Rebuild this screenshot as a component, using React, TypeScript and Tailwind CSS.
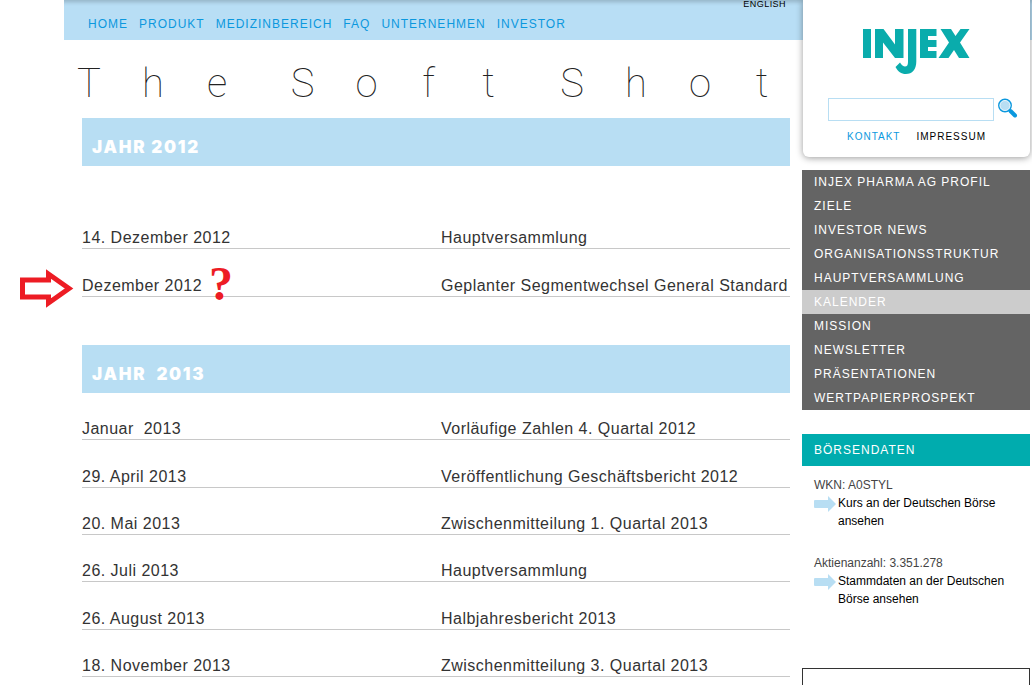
import React from 'react';

const mainNav = ['Home', 'Produkt', 'Medizinbereich', 'FAQ', 'Unternehmen', 'Investor'];

const sideNav = [
  'INJEX Pharma AG Profil',
  'Ziele',
  'Investor News',
  'Organisationsstruktur',
  'Hauptversammlung',
  'Kalender',
  'Mission',
  'Newsletter',
  'Präsentationen',
  'Wertpapierprospekt'
];

const events2012 = [
  { date: '14. Dezember 2012', title: 'Hauptversammlung' },
  { date: 'Dezember 2012', title: 'Geplanter Segmentwechsel General Standard', marked: true }
];

const events2013 = [
  { date: 'Januar  2013', title: 'Vorläufige Zahlen 4. Quartal 2012' },
  { date: '29. April 2013', title: 'Veröffentlichung Geschäftsbericht 2012' },
  { date: '20. Mai 2013', title: 'Zwischenmitteilung 1. Quartal 2013' },
  { date: '26. Juli 2013', title: 'Hauptversammlung' },
  { date: '26. August 2013', title: 'Halbjahresbericht 2013' },
  { date: '18. November 2013', title: 'Zwischenmitteilung 3. Quartal 2013' }
];

function Logo() {
  return <svg viewBox="0 0 108 48" className="h-12 w-[108px]" fill="#0aacac" role="img" aria-label="INJEX">
      <path d="M0 2h8v29H0z" />
      <path d="M12 2h8.500L32 17.500V2h8.500v29H32L20 15.500V31h-8z" />
      <path d="M45 2h8.300v32.500c0 8-4 12.500-10.500 12.500-4.500 0-8-2.500-10.300-7l4.500-4.500c1.500 2.500 3.500 4 5 4 2 0 3-1.500 3-4.500z" />
      <path d="M57 2h16.500v7H65v4h8.500v7H65v4h8.500v7H57z" />
      <path d="M77.500 2H88l4.500 7 5-7h9L97 15.500 106.500 31H96l-5-8-5.500 8h-10L86 15.500z" />
    </svg>;
}

function Slogan() {
  return <div className="flex h-[78px] items-center justify-between pt-2.5 pr-6 pl-px font-['Roboto'] text-[40px] font-thin text-[#222]">
      {['The', 'Soft', 'Shot'].map(word => <span key={word} className="flex gap-13">
          {word.split('').map((letter, i) => <span key={i} className={`flex justify-center ${'ft'.includes(letter) ? 'w-2' : 'w-3'}`}>
              {letter}
            </span>)}
        </span>)}
    </div>;
}

function YearHeading({ children }) {
  return <h2 className="h-12 bg-[#b8def3] px-[10px] pt-[17px] font-['Inter'] text-[17px] leading-6 font-black tracking-widest whitespace-pre text-white">
      {children}
    </h2>;
}

function EventTable({ label, events, className }) {
  return <table aria-label={label} className={`w-full table-fixed border-separate border-spacing-0 text-left text-base leading-5 tracking-[0.03em] text-[#333] ${className}`}>
      <tbody>
        {events.map(event => <tr key={event.date}>
            <th scope="row" className="relative w-[359px] border-b border-[#c8c8c8] align-bottom font-normal whitespace-pre">
              {event.marked && <Arrow />}
              {event.date}
              {event.marked && <span className="absolute -bottom-3 left-[127px] font-['Liberation_Serif'] text-[48px] leading-[48px] font-bold text-[#ed1c24]">
                  ?
                </span>}
            </th>
            <td className="border-b border-[#c8c8c8] align-bottom whitespace-nowrap">
              {event.title}
            </td>
          </tr>)}
      </tbody>
    </table>;
}

function Arrow() {
  return <svg viewBox="0 0 54 40" className="absolute -bottom-3 -left-[62px] h-10 w-[54px]" fill="#fff" stroke="#ed1c24" strokeWidth="5" aria-hidden="true">
      <path d="M2.500 12h26V6L49 20.500 28.500 35v-6h-26z" />
    </svg>;
}

function StockLink({ children }) {
  return <a href="#" className="flex items-start gap-0.5 text-black">
      <svg viewBox="0 0 22 16" className="mt-0.5 h-4 w-[22px] shrink-0" fill="#b8def3" aria-hidden="true">
        <path d="M1 4h13V0l8 8-8 8v-4H1a1 1 0 0 1-1-1V5a1 1 0 0 1 1-1z" />
      </svg>
      <span>{children}</span>
    </a>;
}

export default function App() {
  return <div className="overflow-hidden bg-white pl-16 font-['Liberation_Sans',sans-serif]">
      <header className="flex h-10 items-start justify-between bg-[#b8def5] pr-[246px] pl-6 uppercase shadow-[inset_0_6px_4px_-4px_rgba(0,0,0,0.2)]">
        <nav className="flex gap-[11px] pt-3.5 text-xs leading-5 tracking-[1px] text-[#0b98de]">
          {mainNav.map(item => <a key={item} href="#">{item}</a>)}
        </nav>
        <a href="#" className="text-[9px] leading-2 tracking-wider text-black">English</a>
      </header>
      <div className="flex gap-3 pr-0.5 pl-[18px]">
        <main className="min-w-0 flex-1">
          <Slogan />
          <YearHeading>JAHR 2012</YearHeading>
          <div className="pt-[35px] pb-12">
            <EventTable label="Termine 2012" events={events2012} className="h-24" />
          </div>
          <YearHeading>JAHR  2013</YearHeading>
          <EventTable label="Termine 2013" events={events2013} className="h-[284px]" />
        </main>
        <aside className="-mt-10 w-[228px] shrink-0">
          <div className="mb-[13px] ml-px flex h-[157px] flex-col items-center rounded-b-md bg-white pt-[27px] shadow-[0_1px_7px_rgba(0,0,0,0.4)]">
            <Logo />
            <form className="mt-[23px] ml-3 flex items-start gap-1">
              <input type="text" aria-label="Suche" className="h-[23px] w-[166px] border border-[#b8def3] bg-white px-1 text-xs" />
              <button type="submit" aria-label="Suchen">
                <svg viewBox="0 0 20 20" className="h-5 w-5">
                  <path d="M12.500 13l4.500 4.500" stroke="#0b98de" strokeWidth="4" strokeLinecap="round" />
                  <circle cx="7" cy="7.500" r="6.200" fill="#b8def3" stroke="#0b98de" strokeWidth="1.500" />
                  <circle cx="7" cy="7.500" r="5" fill="none" stroke="#e6f4fb" strokeWidth="1" />
                </svg>
              </button>
            </form>
            <div className="mt-2 flex gap-4 text-[10px] leading-4 tracking-[1px] uppercase">
              <a href="#" className="text-[#0b98de]">Kontakt</a>
              <a href="#" className="text-black">Impressum</a>
            </div>
          </div>
          <nav className="mb-6 bg-[#646464] text-xs leading-6 tracking-[1px] text-white uppercase">
            {sideNav.map(item => <a key={item} href="#" className={`block px-3 ${item === 'Kalender' ? 'bg-[#ccc]' : ''}`}>
                {item}
              </a>)}
          </nav>
          <h3 className="bg-[#00acae] px-3 text-xs leading-8 tracking-[1px] text-white uppercase">
            Börsendaten
          </h3>
          <div className="px-3 pt-2.5 text-xs leading-[18px] text-[#444]">
            <p>WKN: A0STYL</p>
            <StockLink>Kurs an der Deutschen Börse ansehen</StockLink>
            <p className="mt-6">Aktienanzahl: 3.351.278</p>
            <StockLink>Stammdaten an der Deutschen Börse ansehen</StockLink>
          </div>
          <div className="mt-15 h-[17px] border border-b-0 border-[#333]" />
        </aside>
      </div>
    </div>;
}
